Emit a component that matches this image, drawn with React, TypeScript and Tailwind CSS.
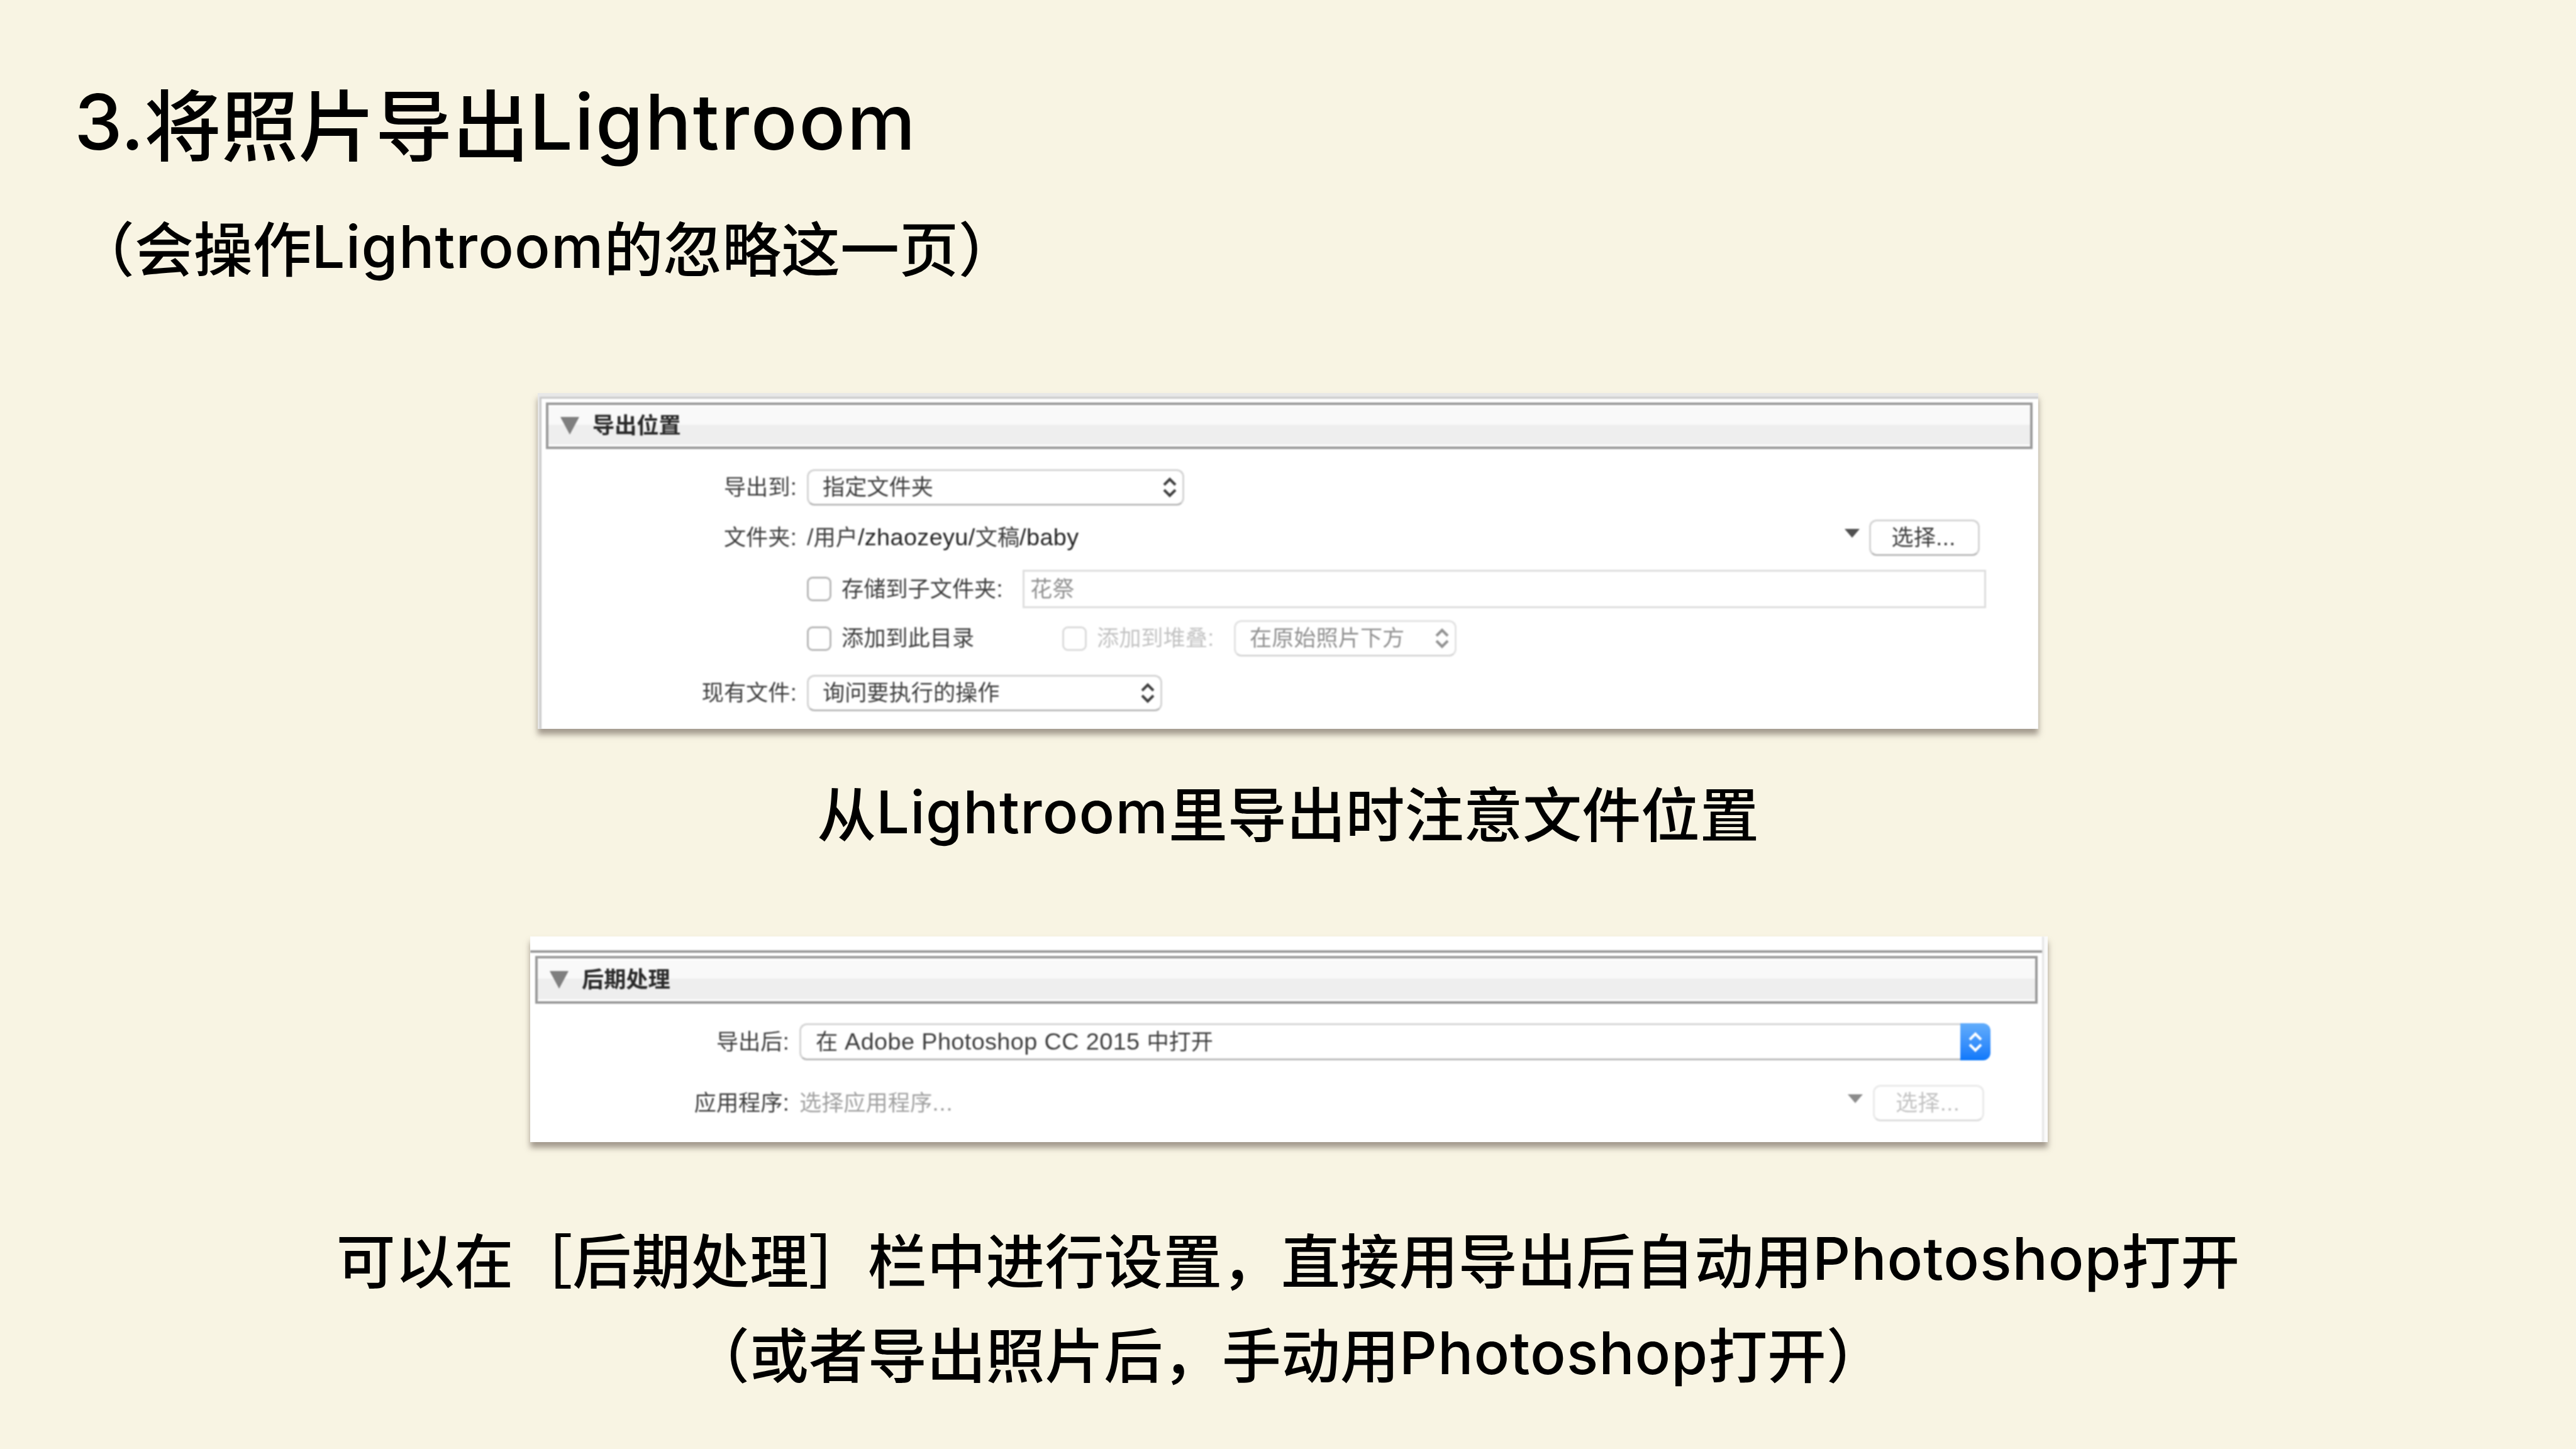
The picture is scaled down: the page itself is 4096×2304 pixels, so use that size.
import clsx from 'clsx';
import type { ReactNode } from 'react';

function Latin({ children, className }: { children: ReactNode; className?: string }) {
    return <span className={clsx('leading-none font-medium', className)}>{children}</span>;
}

// latin glyphs in the dialogs run slightly larger than the chinese ones
function Ui({ children, className }: { children: ReactNode; className?: string }) {
    return <span className={clsx('text-[37.8px] leading-none', className)}>{children}</span>;
}

function Caption({ children, className }: { children: ReactNode; className?: string }) {
    return (
        <p
            className={clsx(
                'flex h-[120px] items-center justify-center text-[93.9px] leading-[120px] font-medium whitespace-nowrap',
                className,
            )}
        >
            <span>{children}</span>
        </p>
    );
}

function Chevrons({ className }: { className?: string }) {
    return (
        <svg viewBox="0 0 24 34" className={clsx('h-[34px] w-[24px] shrink-0', className)} fill="none" stroke="currentColor" strokeWidth="4.2">
            <path d="M3 13 L12 4 L21 13" />
            <path d="M3 21 L12 30 L21 21" />
        </svg>
    );
}

function DownArrow({ className }: { className?: string }) {
    return (
        <svg viewBox="0 0 24 14" className={clsx('h-[14px] w-[24px] shrink-0', className)} fill="currentColor">
            <path d="M0 0 H24 L12 14 Z" />
        </svg>
    );
}

function SectionHeader({ title, className }: { title: string; className?: string }) {
    return (
        <div className={clsx('border-4 border-[#9b9b9b] bg-white py-[3px]', className)}>
            <div className="flex h-full items-center bg-linear-to-b from-[#f9f9f9] from-46% to-[#eeeeee] to-48%">
                <svg viewBox="0 0 30 28" className="ml-[19px] h-[28px] w-[30px]" fill="#7f7f7f">
                    <path d="M0 0 H30 L15 28 Z" />
                </svg>
                <h2 className="ml-[21px] font-bold text-[#2a2a2a]">{title}</h2>
            </div>
        </div>
    );
}

function Row({ label, children, className }: { label?: string; children: ReactNode; className?: string }) {
    return (
        <div className={clsx('flex items-center', className)}>
            <div className="w-[406px] shrink-0 text-right">
                {label}
                {label && <Ui>:</Ui>}
            </div>
            <div className="ml-[16px] flex h-full flex-1 items-center">{children}</div>
        </div>
    );
}

function Select({ value, className }: { value: string; className?: string }) {
    return (
        <div
            className={clsx(
                'flex h-full items-center justify-between rounded-[12px] border-3 border-[#d6d6d6] border-b-[#bdbdbd] bg-white pr-[8px] pl-[22px]',
                className,
            )}
        >
            <span>{value}</span>
            <Chevrons />
        </div>
    );
}

function Checkbox({ className }: { className?: string }) {
    return <span className={clsx('h-[39px] w-[39px] shrink-0 rounded-[9px] border-3 bg-white', className)} />;
}

function PickButton({ className }: { className?: string }) {
    return (
        <div className={clsx('flex h-[58px] items-center justify-center rounded-[12px] border-3 bg-white pr-[3px]', className)}>
            <span>
                选择<Ui>...</Ui>
            </span>
        </div>
    );
}

function ExportLocation() {
    return (
        <section className="mx-auto mt-[167px] h-[534px] w-[2386px] bg-[#e8e8e8] font-['Liberation_Sans','Noto_Sans_CJK_SC',sans-serif] text-[35.2px] leading-[44px] whitespace-nowrap text-[#3f3f3f] shadow-[0_9px_9px_rgba(80,66,58,0.5)]">
            <div className="h-full overflow-hidden pt-[6px] pl-[3px]">
                <div className="h-[528px] border-t-3 border-l-3 border-[#cacaca] bg-white blur-[0.8px]">
                    <SectionHeader title="导出位置" className="mt-[6px] ml-[7px] h-[74px] w-[2364px]" />
                    <Row label="导出到" className="mt-[32px] h-[58px]">
                        <Select value="指定文件夹" className="w-[600px]" />
                    </Row>
                    <Row label="文件夹" className="mt-[22px] h-[58px]">
                        <span>
                            <Ui>/</Ui>用户<Ui className="tracking-[0.4px] text-[#262626]">/zhaozeyu/</Ui>文稿
                            <Ui className="tracking-[0.4px] text-[#262626]">/baby</Ui>
                        </span>
                        <DownArrow className="mt-[-14px] ml-auto text-[#505050]" />
                        <PickButton className="mr-[93px] ml-[15px] w-[176px] border-[#d6d6d6] border-b-[#bdbdbd]" />
                    </Row>
                    <Row className="mt-[22px] h-[61px]">
                        <Checkbox className="border-[#b9b9b9]" />
                        <span className="ml-[16px]">
                            存储到子文件夹<Ui>:</Ui>
                        </span>
                        <div className="mr-[83px] ml-auto flex h-full w-[1532px] items-center border-3 border-[#dedede] pl-[9px] text-[#929292]">
                            花祭
                        </div>
                    </Row>
                    <Row className="mt-[19px] h-[58px]">
                        <Checkbox className="border-[#b9b9b9]" />
                        <span className="ml-[16px] w-[351px]">添加到此目录</span>
                        <Checkbox className="border-[#dcdcdc]" />
                        <span className="ml-[16px] w-[218px] text-[#c4c4c4]">
                            添加到堆叠<Ui>:</Ui>
                        </span>
                        <Select value="在原始照片下方" className="w-[354px] border-[#e4e4e4] border-b-[#d8d8d8] text-[#929292]" />
                    </Row>
                    <Row label="现有文件" className="mt-[29px] h-[58px]">
                        <Select value="询问要执行的操作" className="w-[565px]" />
                    </Row>
                </div>
            </div>
        </section>
    );
}

function PostProcessing() {
    return (
        <section className="mt-[132px] ml-[843px] h-[327px] w-[2413px] bg-[#fafafa] font-['Liberation_Sans','Noto_Sans_CJK_SC',sans-serif] text-[35.2px] leading-[44px] whitespace-nowrap text-[#3f3f3f] shadow-[0_9px_9px_rgba(80,66,58,0.5)]">
            <div className="h-full overflow-hidden">
                <div className="h-full w-[2407px] border-r-3 border-[#e6e6e6] bg-white blur-[0.8px]">
                    <div className="h-[26px] border-b-4 border-[#9b9b9b]" />
                    <SectionHeader title="后期处理" className="mt-[5px] ml-[8px] h-[76px] w-[2389px]" />
                    <Row label="导出后" className="mt-[31px] ml-[6px] h-[59px]">
                        <div className="flex h-full w-[1846px] items-center rounded-l-[12px] border-3 border-r-0 border-[#d6d6d6] border-b-[#bdbdbd] pl-[23px]">
                            <span>
                                在<Ui className="tracking-[0.4px]"> Adobe Photoshop CC 2015 </Ui>中打开
                            </span>
                        </div>
                        <div className="flex h-full w-[48px] items-center justify-center rounded-r-[12px] bg-linear-to-b from-[#62adfb] to-[#0a78fb] text-white">
                            <Chevrons />
                        </div>
                    </Row>
                    <Row label="应用程序" className="mt-[38px] ml-[6px] h-[59px]">
                        <span className="text-[#a2a2a2]">
                            选择应用程序<Ui className="tracking-[0.6px]">...</Ui>
                        </span>
                        <DownArrow className="mt-[-14px] ml-auto text-[#8c8c8c]" />
                        <PickButton className="mr-[92px] ml-[16px] w-[177px] border-[#ebebeb] border-b-[#dedede] text-[#c4c4c4]" />
                    </Row>
                </div>
            </div>
        </section>
    );
}

export default function App() {
    return (
        <main lang="zh-CN" className="flex h-[2304px] w-[4096px] flex-col overflow-hidden bg-[#f8f4e3] font-['Inter','Noto_Sans_CJK_SC',sans-serif] text-black">
            <h1 className="mt-[122px] ml-[118px] h-[160px] text-[122.5px] leading-[160px] font-medium whitespace-nowrap">
                <Latin className="align-[8px]">3.</Latin>
                将照片导出
                <Latin className="align-[8px] tracking-[0.021em]">Lightroom</Latin>
            </h1>
            <Caption className="mt-[56px] ml-[120px] self-start">
                （会操作<Latin className="align-[6px] tracking-[0.012em]">Lightroom</Latin>的忽略这一页）
            </Caption>
            <ExportLocation />
            <Caption className="mt-[78px]">
                从<Latin className="align-[6px] tracking-[0.012em]">Lightroom</Latin>里导出时注意文件位置
            </Caption>
            <PostProcessing />
            <Caption className="mt-[131px]">
                可以在［后期处理］栏中进行设置，直接用导出后自动用<Latin className="align-[6px] tracking-[0.01em]">Photoshop</Latin>打开
            </Caption>
            <Caption className="mt-[30px]">
                （或者导出照片后，手动用<Latin className="align-[6px] tracking-[0.01em]">Photoshop</Latin>打开）
            </Caption>
        </main>
    );
}
